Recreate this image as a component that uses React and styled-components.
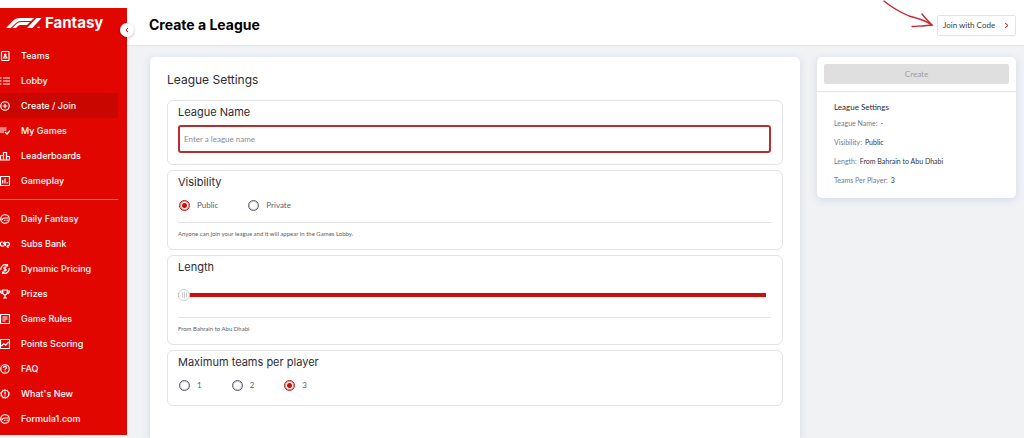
import { useState } from 'react';
import styled, { createGlobalStyle } from 'styled-components';

const colors = {
  red: '#e10600',
  activeRed: '#c90700',
  darkRed: '#c8100e',
  page: '#f0f2f4',
  line: '#e2e3e6',
  heading: '#2b2b31',
  text: '#5c5d66',
  label: '#72788f',
};

const fonts = {
  display: '"Inter", sans-serif',
  body: '"Lato", sans-serif',
};

const GlobalStyle = createGlobalStyle`
  * {
    box-sizing: border-box;
  }

  body {
    margin: 0;
    background: ${colors.page};
    color: ${colors.heading};
    font-family: ${fonts.body};
    overflow: hidden;
  }

  h1, h2, h3, p, ul, dl, dd, fieldset {
    margin: 0;
    padding: 0;
  }

  button, input {
    font-family: inherit;
  }
`;

const Layout = styled.div`
  display: flex;
  align-items: stretch;
  min-height: 100vh;
`;

const SideColumn = styled.div`
  flex: 0 0 127px;
  border-top: 8px solid #fff;
`;

const Sidebar = styled.nav`
  position: relative;
  z-index: 1;
  padding-bottom: 4px;
  background: ${colors.red};
  color: #fff;
  font-family: ${fonts.display};
`;

const Brand = styled.div`
  display: flex;
  align-items: center;
  gap: 3px;
  height: 35px;
  padding: 0 0 5px 6px;
  font-size: 15px;
  font-weight: 700;
  line-height: 18px;
`;

const CollapseBtn = styled.button`
  position: absolute;
  top: 15px;
  right: -7px;
  display: flex;
  align-items: center;
  justify-content: center;
  width: 14px;
  height: 14px;
  padding: 0;
  background: #fff;
  border: 0;
  border-radius: 50%;
  box-shadow: 0 1px 3px rgba(0, 0, 0, 0.25);
  cursor: pointer;
`;

const NavList = styled.ul`
  list-style: none;
  padding-right: 9px;
`;

const NavDivider = styled.hr`
  height: 1px;
  margin: 6px 9px 6px 0;
  background: #f0706c;
  border: 0;
`;

const NavLink = styled.a`
  display: flex;
  align-items: center;
  gap: 11px;
  height: 25px;
  background: ${({ $active }) => ($active ? colors.activeRed : 'transparent')};
  border-radius: 0 3px 3px 0;
  color: #fff;
  font-size: 9px;
  font-weight: 500;
  line-height: 12px;
  text-decoration: none;
  white-space: nowrap;
`;

const NavIcon = styled.svg`
  flex: none;
  width: 10px;
  height: 10px;
  fill: none;
  stroke: currentColor;
  stroke-width: 2.4;
`;

const Page = styled.main`
  display: flex;
  flex: 1;
  flex-direction: column;
  min-width: 0;
`;

const Header = styled.header`
  position: relative;
  display: flex;
  align-items: center;
  justify-content: space-between;
  height: 46px;
  padding: 5px 8px 0 22px;
  background: #fff;
  border-bottom: 1px solid ${colors.line};
`;

const PageTitle = styled.h1`
  color: #000;
  font-family: ${fonts.display};
  font-size: 14px;
  font-weight: 700;
  line-height: 18px;
`;

const JoinBtn = styled.button`
  display: flex;
  align-items: center;
  justify-content: space-between;
  width: 79px;
  height: 21px;
  padding: 0 6px 0 5px;
  background: #fff;
  border: 1px solid ${colors.line};
  border-radius: 2px;
  color: #3a3a40;
  font-size: 8px;
  line-height: 10px;
  cursor: pointer;
`;

const Scribble = styled.svg`
  position: absolute;
  top: 0;
  right: 89px;
  width: 54px;
  height: 30px;
  pointer-events: none;
`;

const Content = styled.div`
  display: grid;
  flex: 1;
  grid-template-columns: minmax(0, 1fr) 199px;
  gap: 17px;
  padding: 11px 8px 0 23px;
`;

const Card = styled.section`
  background: #fff;
  border-radius: 5px;
  box-shadow: 0 2px 8px rgba(70, 100, 170, 0.16);
`;

const FormCard = styled(Card)`
  padding: 15px 17px;
  border-radius: 5px 5px 0 0;
`;

const CardTitle = styled.h2`
  margin-bottom: 12px;
  font-family: ${fonts.display};
  font-size: 12px;
  font-weight: 400;
  line-height: 16px;
`;

const Sections = styled.form`
  display: flex;
  flex-direction: column;
  gap: 5px;
`;

const Section = styled.div`
  padding: 4px 11px 10px 10px;
  border: 1px solid ${colors.line};
  border-radius: 6px;
`;

const SectionTitle = styled.h3`
  font-family: ${fonts.display};
  font-size: 11px;
  font-weight: 400;
  line-height: 14px;
`;

const NameInput = styled.input`
  display: block;
  width: 100%;
  height: 28px;
  margin: 6px 0 1px;
  padding: 0 4px;
  background: #fff;
  border: 2px solid #b3302f;
  border-radius: 3px;
  color: ${colors.heading};
  font-size: 8px;
  outline: 0;

  &::placeholder {
    color: #8b8b90;
    opacity: 1;
  }
`;

const Options = styled.div`
  display: flex;
  gap: 29px;
  margin-top: 6px;
`;

const Option = styled.label`
  display: flex;
  align-items: center;
  gap: 7px;
  height: 20px;
  color: ${colors.text};
  font-size: 8px;
  line-height: 10px;
`;

const Radio = styled.input`
  appearance: none;
  width: 11px;
  height: 11px;
  margin: 0 0 0 1px;
  border: 1px solid #5b5c6c;
  border-radius: 50%;
  box-shadow: inset 0 0 0 1px #c9cad2;

  &:checked {
    background: radial-gradient(circle, ${colors.darkRed} 2px, #fff 3px);
    border-color: ${colors.darkRed};
    box-shadow: inset 0 0 0 1px #e98f8d;
  }
`;

const Slider = styled.input`
  appearance: none;
  display: block;
  width: calc(100% - 5px);
  height: 12px;
  margin: 15px 0 16px;
  background: linear-gradient(${colors.darkRed}, ${colors.darkRed}) center / 100% 4px no-repeat;
  border-radius: 2px;
  outline: 0;

  &::-webkit-slider-thumb {
    appearance: none;
    width: 12px;
    height: 12px;
    background:
      linear-gradient(90deg, #c9c9cf 1px, transparent 1px) 0 center / 2px 6px repeat-x content-box,
      #fff;
    padding: 0 2px 0 3px;
    border: 1px solid #cfcfd4;
    border-radius: 50%;
  }
`;

const Note = styled.p`
  margin-top: ${({ $afterOptions }) => ($afterOptions ? '7px' : '0')};
  padding-top: 6px;
  border-top: 1px solid ${colors.line};
  color: ${colors.text};
  font-size: 6px;
  line-height: 10px;
`;

const Aside = styled.aside`
  align-self: start;
`;

const CreateArea = styled.div`
  padding: 7px;
  border-bottom: 1px solid ${colors.line};
`;

const CreateBtn = styled.button`
  display: block;
  width: 100%;
  height: 20px;
  padding: 0;
  background: #dfdfdf;
  border: 0;
  border-radius: 2px;
  color: #9c9c9f;
  font-size: 8px;
  line-height: 10px;
`;

const Summary = styled.div`
  padding: 10px 17px 8px;
`;

const SummaryTitle = styled.h2`
  margin-bottom: 2px;
  font-size: 8px;
  font-weight: 400;
  line-height: 10px;
`;

const SummaryRow = styled.div`
  display: flex;
  gap: 3px;
  font-size: 7px;
  line-height: 19px;

  dt {
    color: ${colors.label};
  }

  dd {
    color: #33343c;
  }
`;

const icons = {
  teams: (
    <>
      <rect x="3" y="1" width="15" height="18" rx="2" />
      <circle cx="10.5" cy="7.5" r="1.5" />
      <path d="M7 14c0-4 7-4 7 0z" />
    </>
  ),
  lobby: <path d="M0 4h3M6 4h14M0 10h3M6 10h14M0 16h3M6 16h14" />,
  create: (
    <>
      <circle cx="10" cy="10" r="8.5" />
      <path d="M10 5.5v9M5.5 10h9" />
    </>
  ),
  games: <path d="M0 4h13M0 8h13M0 12h8M10 12l4 4 6-7" />,
  podium: <path d="M1 9h6v9H1zM7 3h6v15H7zM13 11h6v7h-6z" />,
  gameplay: (
    <>
      <rect x="1" y="1" width="18" height="18" rx="1" />
      <path d="M5.5 15V8M10 15V5M14.5 15v-3" />
    </>
  ),
  f1: (
    <>
      <circle cx="10" cy="10" r="8.5" />
      <path d="M4 12c1-3 2-4 5-4h7M8 12.500h3M13 12.500h3" />
    </>
  ),
  subs: (
    <>
      <path d="M5 6a4.200 4.200 0 1 0 4 5V7M6 9l3-3 2 2" />
      <path d="M11 9v5M11 10a4 4 0 1 1 4 4.500M17 12l-3 2.500 3 3" />
    </>
  ),
  pricing: (
    <>
      <path d="M2 12a8.500 8.500 0 0 1 13-9M18 8a8.500 8.500 0 0 1-13 9M15 0v4h-4M5 20v-4h4" />
      <path d="M12.500 7.500c-1-1.500-5-1.500-5 .700s5 1.400 5 3.600-4 2.400-5 .700M10 5v10" />
    </>
  ),
  prizes: (
    <path d="M5.500 2h9v5c0 6-9 6-9 0zM5 4H1c0 4 2 5 5 5M15 4h4c0 4-2 5-5 5M10 12v6M6 18h8" />
  ),
  rules: (
    <>
      <rect x="1" y="1" width="18" height="18" rx="1" />
      <path d="M5 6h10M5 10h10M5 14h6" />
    </>
  ),
  points: (
    <>
      <rect x="1" y="1" width="18" height="18" rx="1" />
      <path d="M3 14l4.500-5 4 3.500L17 6" />
    </>
  ),
  faq: (
    <>
      <circle cx="10" cy="10" r="8.500" />
      <path d="M7 8c0-4 6-4 6-.500 0 2-3 2-3 4.500M10 13.500v2" />
    </>
  ),
  news: (
    <>
      <circle cx="10" cy="10" r="7.500" />
      <circle cx="10" cy="10" r="9" strokeDasharray="2.800 2.850" strokeWidth="1.500" />
      <path d="M10 5v6M10 13v2" />
    </>
  ),
};

const gameLinks = [
  { icon: 'teams', text: 'Teams' },
  { icon: 'lobby', text: 'Lobby' },
  { icon: 'create', text: 'Create / Join' },
  { icon: 'games', text: 'My Games' },
  { icon: 'podium', text: 'Leaderboards' },
  { icon: 'gameplay', text: 'Gameplay' },
];

const infoLinks = [
  { icon: 'f1', text: 'Daily Fantasy' },
  { icon: 'subs', text: 'Subs Bank' },
  { icon: 'pricing', text: 'Dynamic Pricing' },
  { icon: 'prizes', text: 'Prizes' },
  { icon: 'rules', text: 'Game Rules' },
  { icon: 'points', text: 'Points Scoring' },
  { icon: 'faq', text: 'FAQ' },
  { icon: 'news', text: "What's New" },
  { icon: 'f1', text: 'Formula1.com' },
];

const Nav = ({ links, active }) => (
  <NavList>
    {links.map(({ icon, text }) => (
      <li key={text}>
        <NavLink href="#" $active={text === active}>
          <NavIcon viewBox="0 0 20 20" aria-hidden="true">
            {icons[icon]}
          </NavIcon>
          {text}
        </NavLink>
      </li>
    ))}
  </NavList>
);

const RadioGroup = ({ name, options, value, onChange }) => (
  <Options role="radiogroup" aria-labelledby={`${name}-title`}>
    {options.map((option) => (
      <Option key={option}>
        <Radio
          type="radio"
          name={name}
          value={option}
          checked={value === option}
          onChange={() => onChange(option)}
        />
        {option}
      </Option>
    ))}
  </Options>
);

const App = () => {
  const [leagueName, setLeagueName] = useState('');
  const [visibility, setVisibility] = useState('Public');
  const [start, setStart] = useState(0);
  const [maxTeams, setMaxTeams] = useState('3');

  const length = 'From Bahrain to Abu Dhabi';

  const summary = [
    ['League Name:', leagueName || '-'],
    ['Visibility:', visibility],
    ['Length:', length],
    ['Teams Per Player:', maxTeams],
  ];

  return (
    <>
      <GlobalStyle />
      <Layout>
        <SideColumn>
          <Sidebar>
            <Brand>
              <svg width="36" height="10" viewBox="0 0 108 30" fill="#fff" aria-label="F1">
                <path d="M0 30 20 9Q28 0 42 0h42L75 9H43q-7 0-12 5L14 30z" />
                <path d="M19 30 32 17q5-5 12-5h28l-9 9H44q-5 0-8 3l-6 6z" />
                <path d="M63 30 91 0h16L79 30zM94 26h7v4h-7z" />
              </svg>
              Fantasy
            </Brand>
            <CollapseBtn type="button" aria-label="Collapse menu">
              <svg width="4" height="6" viewBox="0 0 4 6" fill="none" stroke={colors.red}>
                <path d="M3 1 1 3l2 2" />
              </svg>
            </CollapseBtn>
            <Nav links={gameLinks} active="Create / Join" />
            <NavDivider />
            <Nav links={infoLinks} />
          </Sidebar>
        </SideColumn>

        <Page>
          <Header>
            <PageTitle>Create a League</PageTitle>
            <Scribble viewBox="0 0 54 30" fill="none" stroke="#c4262b" strokeWidth="1.3" strokeLinecap="round" aria-hidden="true">
              <path d="M3 1c7 6 16 11 25 15 8 2 16 4 23 9" />
              <path d="M41 14c3 4 7 8 10 11-6 1-13 1-20 1.500" />
            </Scribble>
            <JoinBtn type="button">
              Join with Code
              <svg width="5" height="7" viewBox="0 0 5 7" fill="none" stroke={colors.darkRed}>
                <path d="M1 1l3 2.500L1 6" />
              </svg>
            </JoinBtn>
          </Header>

          <Content>
            <FormCard>
              <CardTitle>League Settings</CardTitle>
              <Sections>
                <Section>
                  <SectionTitle>
                    <label htmlFor="league-name">League Name</label>
                  </SectionTitle>
                  <NameInput
                    id="league-name"
                    type="text"
                    placeholder="Enter a league name"
                    value={leagueName}
                    onChange={(e) => setLeagueName(e.target.value)}
                  />
                </Section>
                <Section>
                  <SectionTitle id="visibility-title">Visibility</SectionTitle>
                  <RadioGroup
                    name="visibility"
                    options={['Public', 'Private']}
                    value={visibility}
                    onChange={setVisibility}
                  />
                  <Note $afterOptions>
                    Anyone can join your league and it will appear in the Games Lobby.
                  </Note>
                </Section>
                <Section>
                  <SectionTitle>
                    <label htmlFor="length">Length</label>
                  </SectionTitle>
                  <Slider
                    id="length"
                    type="range"
                    min="0"
                    max="22"
                    value={start}
                    onChange={(e) => setStart(Number(e.target.value))}
                  />
                  <Note>{length}</Note>
                </Section>
                <Section>
                  <SectionTitle id="teams-title">Maximum teams per player</SectionTitle>
                  <RadioGroup
                    name="teams"
                    options={['1', '2', '3']}
                    value={maxTeams}
                    onChange={setMaxTeams}
                  />
                </Section>
              </Sections>
            </FormCard>

            <Aside>
              <Card>
                <CreateArea>
                  <CreateBtn type="button" disabled>
                    Create
                  </CreateBtn>
                </CreateArea>
                <Summary>
                  <SummaryTitle>League Settings</SummaryTitle>
                  <dl>
                    {summary.map(([term, value]) => (
                      <SummaryRow key={term}>
                        <dt>{term}</dt>
                        <dd>{value}</dd>
                      </SummaryRow>
                    ))}
                  </dl>
                </Summary>
              </Card>
            </Aside>
          </Content>
        </Page>
      </Layout>
    </>
  );
};

export default App;
